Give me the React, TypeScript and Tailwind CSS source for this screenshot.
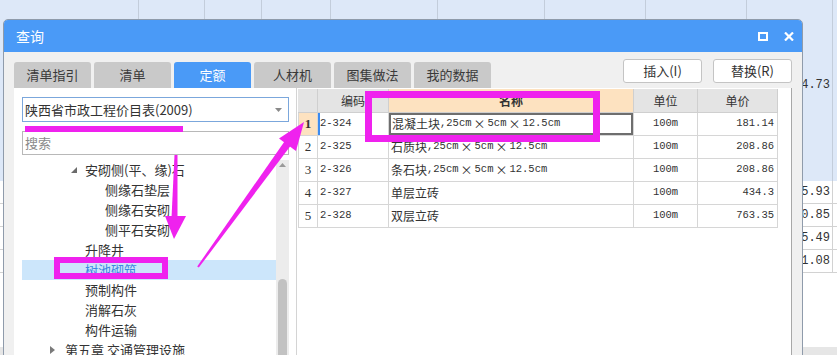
import React from "react";

const bgCols = [139, 66, 57, 69, 107, 107, 101, 101, 86];
const bgVals = ["15.93", "10.85", "15.49", "21.08"];

function Mono({ children }: { children: React.ReactNode }) {
  return <span className="font-['Liberation_Mono',monospace] text-[10.5px]">{children}</span>;
}

function X() {
  return <span className="mx-[2px] text-[12px]">×</span>;
}

function Dims() {
  return (
    <>
      <Mono>,25cm</Mono>
      <X />
      <Mono>5cm</Mono>
      <X />
      <Mono>12.5cm</Mono>
    </>
  );
}

const rows = [
  { n: 1, code: "2-324", name: "混凝土块", dims: true, price: "181.14" },
  { n: 2, code: "2-325", name: "石质块", dims: true, price: "208.86" },
  { n: 3, code: "2-326", name: "条石块", dims: true, price: "208.86" },
  { n: 4, code: "2-327", name: "单层立砖", dims: false, price: "434.3" },
  { n: 5, code: "2-328", name: "双层立砖", dims: false, price: "763.35" },
];

const tabs = ["清单指引", "清单", "定额", "人材机", "图集做法", "我的数据"];

type TreeRow = { text: string; pad: string; kind?: "open" | "closed"; sel?: boolean };
const tree: TreeRow[] = [
  { text: "安砌侧(平、缘)石", pad: "pl-[63px]", kind: "open" },
  { text: "侧缘石垫层", pad: "pl-[83px]" },
  { text: "侧缘石安砌", pad: "pl-[83px]" },
  { text: "侧平石安砌", pad: "pl-[83px]" },
  { text: "升降井", pad: "pl-[63px]" },
  { text: "树池砌筑", pad: "pl-[63px]", sel: true },
  { text: "预制构件", pad: "pl-[63px]" },
  { text: "消解石灰", pad: "pl-[63px]" },
  { text: "构件运输", pad: "pl-[63px]" },
  { text: "第五章 交通管理设施", pad: "pl-[43px]", kind: "closed" },
];

export default function App() {
  return (
    <div className="relative w-[837px] h-[355px] overflow-hidden bg-white font-['Noto_Sans_CJK_SC',sans-serif] text-[#333]">
      {/* background application sheet */}
      <div className="flex flex-col w-full h-full">
        <div className="flex h-[181px] bg-[#dde8f8]">
          {bgCols.map((w, i) => (
            <div
              key={i}
              style={{ width: w }}
              className="h-full border-r border-[#c3cddb] flex items-center justify-end pr-[2px] pb-[12px]"
            >
              {i === bgCols.length - 1 && (
                <span className="font-['Liberation_Mono',monospace] text-[12px]">34.73</span>
              )}
            </div>
          ))}
        </div>
        {bgVals.map((v, r) => (
          <div key={r} className="flex h-[23px] border-b border-[#d2d2d2]">
            {bgCols.map((w, i) => (
              <div
                key={i}
                style={{ width: w }}
                className="h-full border-r border-[#d2d2d2] flex items-center justify-end pr-[2px]"
              >
                {i === bgCols.length - 1 && (
                  <span className="font-['Liberation_Mono',monospace] text-[12px]">{v}</span>
                )}
              </div>
            ))}
          </div>
        ))}
        <div className="flex-1" />
        <div className="h-[8px] bg-[#e6e6e6]" />
      </div>

      {/* dialog window */}
      <div className="absolute left-[3px] top-[19px] w-[800px] h-[345px] flex flex-col border border-[#8f9bab] rounded-t-[5px] overflow-hidden bg-[#f0f0f0]">
        <div className="h-[32px] shrink-0 bg-[#4a9af7] flex items-center justify-between pl-[12px] pr-[8px]">
          <span className="text-white text-[14px] leading-none">查询</span>
          <div className="flex items-center gap-[16px]">
            <svg width="10" height="9" viewBox="0 0 10 9">
              <rect x="1" y="1" width="8" height="7" fill="none" stroke="#fff" strokeWidth="2" />
            </svg>
            <svg width="10" height="9" viewBox="0 0 10 9">
              <path d="M1 0.5 L9 8.5 M9 0.5 L1 8.5" stroke="#fff" strokeWidth="2.2" />
            </svg>
          </div>
        </div>

        <div className="flex-1 flex flex-col px-[10px]">
          {/* tabs + buttons */}
          <div className="h-[36px] shrink-0 flex justify-between items-start pt-[6px]">
            <div className="flex gap-[3px] mt-[4px]">
              {tabs.map((t) => (
                <div
                  key={t}
                  className={
                    t === "定额"
                      ? "w-[77px] h-[26px] rounded-t-[3px] bg-[#4a9af7] text-white text-[13px] flex items-center justify-center"
                      : "w-[77px] h-[26px] rounded-t-[3px] bg-[#c9c9c9] text-[#3a3a3a] text-[13px] flex items-center justify-center"
                  }
                >
                  {t}
                </div>
              ))}
            </div>
            <div className="flex gap-[11px] pt-[1px]">
              <div className="w-[79px] h-[24px] bg-white border border-[#c4c4c4] rounded-[3px] text-[13px] flex items-center justify-center">
                插入(I)
              </div>
              <div className="w-[79px] h-[24px] bg-white border border-[#c4c4c4] rounded-[3px] text-[13px] flex items-center justify-center">
                替换(R)
              </div>
            </div>
          </div>

          {/* main */}
          <div className="flex-1 flex">
            {/* left panel */}
            <div className="w-[282px] bg-white flex flex-col pl-[8px] pr-[7px] pt-[9px]">
              <div className="h-[25px] border border-[#7ba7dc] flex items-center justify-between pl-[2px] pr-[6px] text-[13px]">
                <span>陕西省市政工程价目表(2009)</span>
                <svg width="7" height="4" viewBox="0 0 7 4">
                  <path d="M0 0 L7 0 L3.5 4 Z" fill="#8a8a8a" />
                </svg>
              </div>
              <div className="h-[24px] mt-[9px] border border-[#b8b8b8] flex items-center pl-[2px] text-[13px] text-[#8a8a8a]">
                搜索
              </div>
              <div className="flex-1 flex mt-[5px]">
                <div className="flex-1 flex flex-col">
                  {tree.map((r) => (
                    <div
                      key={r.text}
                      className={
                        (r.sel ? "bg-[#cce6fb] text-[#3b87e0] " : "") +
                        "h-[20px] shrink-0 flex items-center text-[13px] relative " +
                        r.pad
                      }
                    >
                      {r.kind === "open" && (
                        <svg className="absolute left-[49px] top-[7px]" width="6" height="6" viewBox="0 0 6 6">
                          <path d="M6 0 L6 6 L0 6 Z" fill="#6b6b6b" />
                        </svg>
                      )}
                      {r.kind === "closed" && (
                        <svg className="absolute left-[28px] top-[6px]" width="5" height="8" viewBox="0 0 5 8">
                          <path d="M0 0 L5 4 L0 8 Z" fill="#7a7a7a" />
                        </svg>
                      )}
                      <span className="whitespace-nowrap">{r.text}</span>
                    </div>
                  ))}
                </div>
                <div className="w-[13px] bg-[#ececec] flex flex-col items-center pt-[3px]">
                  <svg width="7" height="4" viewBox="0 0 7 4">
                    <path d="M0 4 L7 4 L3.5 0 Z" fill="#9a9a9a" />
                  </svg>
                  <div className="mt-[112px] w-[9px] flex-1 rounded-[5px] bg-[#c2c2c2]" />
                </div>
              </div>
            </div>

            {/* right panel (grid) */}
            <div className="flex-1 bg-white border-l border-[#d4d4d4] border-r border-r-[#a8a8a8] pt-[1px] pl-[1px]">
              <div className="flex flex-col w-[481px]">
                <div className="flex h-[24px] text-[12px]">
                  <div className="w-[20px] bg-[#e4e4e4] border-r border-b border-[#cfcfcf]" />
                  <div className="w-[71px] bg-[#e4e4e4] border-r border-b border-[#cfcfcf] flex items-center justify-center">编码</div>
                  <div className="w-[245px] bg-[#fde2c0] border-r border-b border-[#cfcfcf] flex items-center justify-center font-bold">名称</div>
                  <div className="w-[64px] bg-[#e4e4e4] border-r border-b border-[#cfcfcf] flex items-center justify-center">单位</div>
                  <div className="w-[80px] bg-[#e4e4e4] border-r border-b border-[#cfcfcf] flex items-center justify-center">单价</div>
                </div>
                {rows.map((r) => (
                  <div key={r.n} className="flex h-[23px] text-[12px]">
                    <div
                      className={
                        r.n === 1
                          ? "w-[20px] bg-[#fde2c0] border-r border-b border-l border-[#d6d6d6] flex items-center justify-center font-['Liberation_Serif',serif] text-[13px] font-bold"
                          : "w-[20px] border-r border-b border-l border-[#d6d6d6] flex items-center justify-center font-['Liberation_Serif',serif] text-[13px]"
                      }
                    >
                      {r.n}
                    </div>
                    <div
                      className={
                        r.n === 1
                          ? "w-[71px] border-r border-b border-[#d6d6d6] flex items-center pl-[2px] shadow-[inset_2px_0_0_#3c8bf0]"
                          : "w-[71px] border-r border-b border-[#d6d6d6] flex items-center pl-[2px]"
                      }
                    >
                      <Mono>{r.code}</Mono>
                    </div>
                    <div
                      className={
                        r.n === 1
                          ? "w-[245px] border-r border-b border-[#d6d6d6] flex items-center pl-[3px] whitespace-nowrap shadow-[inset_0_0_0_2px_#6e6e6e]"
                          : "w-[245px] border-r border-b border-[#d6d6d6] flex items-center pl-[2px] whitespace-nowrap"
                      }
                    >
                      <span>{r.name}</span>
                      {r.dims && <Dims />}
                    </div>
                    <div className="w-[64px] border-r border-b border-[#d6d6d6] flex items-center justify-center">
                      <Mono>100m</Mono>
                    </div>
                    <div className="w-[80px] border-r border-b border-[#d6d6d6] flex items-center justify-end pr-[3px]">
                      <Mono>{r.price}</Mono>
                    </div>
                  </div>
                ))}
              </div>
            </div>
          </div>
        </div>
      </div>

      {/* magenta annotations */}
      <svg className="absolute left-0 top-0 pointer-events-none" width="837" height="355" viewBox="0 0 837 355">
        <rect x="25" y="126" width="158" height="6" fill="#ef22ee" />
        <rect x="57" y="260" width="108" height="16" fill="none" stroke="#ef22ee" strokeWidth="6" />
        <rect x="368.5" y="94.5" width="228" height="44" fill="none" stroke="#ef22ee" strokeWidth="7" />
        <polygon points="174.5,155 177.5,155 177.5,218 171.5,218" fill="#ef22ee" />
        <polygon points="165,216 186,216 174,239" fill="#ef22ee" />
        <polygon points="198.8,267.6 197.2,266.4 285,140.8 291,145.2" fill="#ef22ee" />
        <polygon points="304,122 279,138.5 296,151" fill="#ef22ee" />
      </svg>
    </div>
  );
}
